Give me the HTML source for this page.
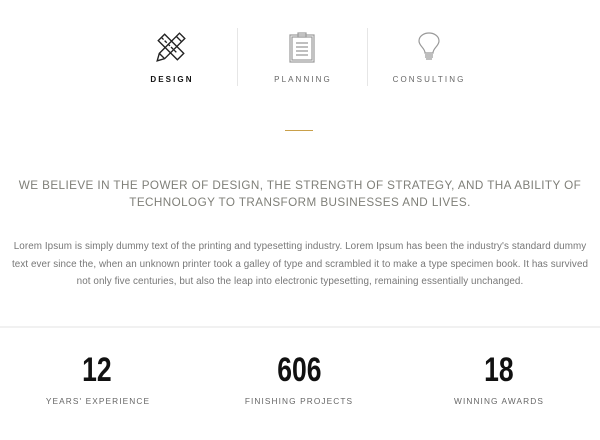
<!DOCTYPE html>
<html><head><meta charset="utf-8"><style>
*{margin:0;padding:0;box-sizing:border-box}
body{width:600px;height:440px;background:#fff;font-family:"Liberation Sans",sans-serif;position:relative;overflow:hidden}
.a{position:absolute;white-space:nowrap}
.lbl{font-size:8px;letter-spacing:2.1px;color:#666;text-align:center;width:130px}
.div{position:absolute;width:1px;background:#e6e6e6;top:28px;height:58px}
.h{left:0;width:600px;text-align:center;font-size:11.7px;letter-spacing:0.42px;color:#7f7f78}
.p{left:0;width:600px;text-align:center;font-size:9.85px;color:#777;letter-spacing:0.08px}
.n{width:200px;text-align:center;font-size:34px;color:#111;font-family:"Liberation Sans Narrow","Liberation Sans",sans-serif;font-weight:bold}
.n span{display:inline-block;transform:scaleX(0.78)}
.s{width:200px;text-align:center;font-size:8.3px;letter-spacing:1.1px;color:#666}
</style></head><body>
<svg class="a" style="left:154px;top:30px" width="34" height="34" viewBox="0 0 32 32" fill="none" stroke="#222" stroke-width="1.3">
<path d="M4 10 L10 4 L28 22 L22 28 Z"/><path d="M7 7 l2 2 M10 10 l2 2 M13 13 l2 2 M16 16 l2 2 M19 19 l2 2"/>
<path d="M24 3 L29 8 L10 27 L3 29 L5 22 Z"/><path d="M21 6 L26 11 M5 22 L10 27"/>
</svg>
<svg class="a" style="left:288px;top:32px" width="28" height="32" viewBox="0 0 28 32" fill="none" stroke="#999" stroke-width="1.2">
<rect x="2" y="3" width="24" height="27"/><rect x="4" y="5" width="20" height="23"/><rect x="10" y="1" width="8" height="4"/>
<path d="M8 11h12M8 15h12M8 19h12M8 23h12"/>
</svg>
<svg class="a" style="left:416px;top:32px" width="26" height="32" viewBox="0 0 26 32" fill="none" stroke="#999" stroke-width="1.2">
<path d="M9 21 C9 16 3 14 3 9 C3 4 8 1 13 1 C18 1 23 4 23 9 C23 14 17 16 17 21 Z"/><path d="M9 23h8M9 25h8M10 27h6"/>
</svg>
<div class="div" style="left:237px"></div><div class="div" style="left:367px"></div>
<div class="a lbl" style="left:107px;top:75px;color:#111;font-weight:bold">DESIGN</div>
<div class="a lbl" style="left:238px;top:75px">PLANNING</div>
<div class="a lbl" style="left:364px;top:75px">CONSULTING</div>
<div class="a" style="left:285px;top:130px;width:28px;height:1px;background:#c9a04a"></div>
<div class="a h" style="top:179px">WE BELIEVE IN THE POWER OF DESIGN, THE STRENGTH OF STRATEGY, AND THA ABILITY OF</div>
<div class="a h" style="top:196px">TECHNOLOGY TO TRANSFORM BUSINESSES AND LIVES.</div>
<div class="a p" style="top:241px">Lorem Ipsum is simply dummy text of the printing and typesetting industry. Lorem Ipsum has been the industry's standard dummy</div>
<div class="a p" style="top:259px">text ever since the, when an unknown printer took a galley of type and scrambled it to make a type specimen book. It has survived</div>
<div class="a p" style="top:276px">not only five centuries, but also the leap into electronic typesetting, remaining essentially unchanged.</div>
<div class="a" style="left:0;top:326px;width:600px;height:2px;background:#f1f1f1"></div>
<div class="a n" style="left:-3px;top:351px"><span>12</span></div>
<div class="a n" style="left:199px;top:351px"><span>606</span></div>
<div class="a n" style="left:399px;top:351px"><span>18</span></div>
<div class="a s" style="left:-2px;top:396px">YEARS' EXPERIENCE</div>
<div class="a s" style="left:199px;top:396px">FINISHING PROJECTS</div>
<div class="a s" style="left:399px;top:396px">WINNING AWARDS</div>
</body></html>
